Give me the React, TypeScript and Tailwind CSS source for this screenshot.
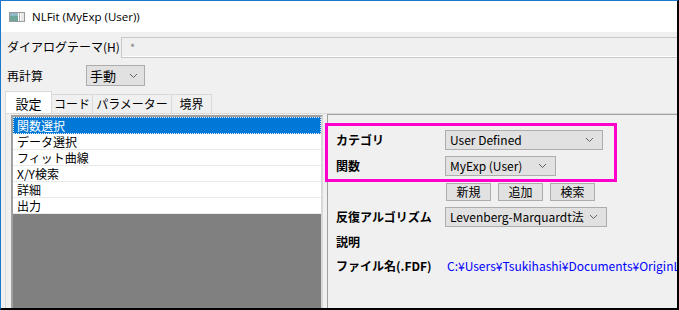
import React from "react";

const FONT = '"Noto Sans CJK JP", "Noto Sans", sans-serif';

function Chevron() {
  return (
    <svg width="9" height="6" viewBox="0 0 9 6" className="shrink-0">
      <polyline points="1,1 4.5,4.5 8,1" fill="none" stroke="#606060" strokeWidth="1" />
    </svg>
  );
}

function Select({ w, text, cls = "" }: { w: string; text: string; cls?: string }) {
  return (
    <div className={`${w} h-[20px] shrink-0 border border-[#adadad] bg-[#e1e1e1] flex items-center justify-between pl-[4px] pr-[8px] text-[12px] leading-none ${cls}`}>
      <span className="whitespace-nowrap">{text}</span>
      <Chevron />
    </div>
  );
}

function Btn({ text }: { text: string }) {
  return (
    <div className="w-[45px] h-[18px] border border-[#adadad] bg-[#e1e1e1] flex items-center justify-center text-[12px] leading-none">
      {text}
    </div>
  );
}

export default function App() {
  const items = ["関数選択", "データ選択", "フィット曲線", "X/Y検索", "詳細", "出力"];
  return (
    <div
      className="relative w-[679px] h-[310px] flex flex-col overflow-hidden bg-[#f0f0f0] border-l border-t border-[#1c78cc] border-r-2 border-b-2 border-r-black border-b-black text-black"
      style={{ fontFamily: FONT }}
    >
      {/* title bar */}
      <div className="h-[31px] bg-white flex items-center shrink-0">
        <svg width="16" height="10" viewBox="0 0 16 10" className="ml-[8px] mt-[1px]">
          <rect x="0.5" y="0.5" width="15" height="9" fill="#ffffff" stroke="#9a9a9a" />
          <rect x="1" y="1" width="8" height="8" fill="#6fa59a" />
          <rect x="1" y="1" width="8" height="3" fill="#8fb8c8" />
          <rect x="10" y="1" width="1" height="8" fill="#b0b0b0" />
          <rect x="12" y="1" width="3" height="8" fill="#e8e8e8" />
        </svg>
        <span
          className="ml-[7px] text-[11.5px] leading-none text-[#000]"
          style={{ fontFamily: '"Open Sans", "Noto Sans", sans-serif' }}
        >
          NLFit (MyExp (User))
        </span>
      </div>

      {/* row 1 */}
      <div className="mt-[5px] h-[21px] flex shrink-0">
        <div className="w-[120px] shrink-0 pl-[6px] text-[12px] leading-[20px] whitespace-nowrap">ダイアログテーマ(H)</div>
        <div className="flex-1 border-t border-l border-b border-[#c8c8c8] bg-[#f0f0f0] flex flex-col">
          <div className="flex-1 pl-[8px] text-[11px] text-[#808080] leading-[18px]">*</div>
          <div className="h-[2px] bg-white" />
        </div>
      </div>

      {/* row 2 */}
      <div className="mt-[7px] h-[21px] flex items-center shrink-0">
        <div className="w-[85px] pl-[6px] text-[12px] leading-none">再計算</div>
        <div className="w-[59px] h-[21px] border border-[#adadad] bg-[#e1e1e1] flex items-center justify-between pl-[3px] pr-[6px] text-[13px] leading-none">
          <span>手動</span>
          <Chevron />
        </div>
      </div>

      {/* tabs */}
      <div className="mt-[5px] h-[22px] flex items-end pl-[4px] shrink-0 text-[12px] leading-none">
        <div className="w-[47px] h-[22px] bg-white border border-b-0 border-[#d9d9d9] flex items-center justify-center pt-[2px] text-[13px]">
          設定
        </div>
        <div className="w-[41px] h-[19px] bg-[#f0f0f0] border-t border-r border-[#d9d9d9] flex items-center justify-center">
          コード
        </div>
        <div className="w-[79px] h-[19px] bg-[#f0f0f0] border-t border-r border-[#d9d9d9] flex items-center justify-center">
          パラメーター
        </div>
        <div className="w-[40px] h-[19px] bg-[#f0f0f0] border-t border-r border-[#d9d9d9] flex items-center justify-center">
          境界
        </div>
      </div>

      {/* tab panel */}
      <div className="flex-1 min-h-0 ml-[4px] border-t border-l border-[#d9d9d9] flex pl-[5px] pt-[1px]">
        {/* list */}
        <div className="w-[312px] shrink-0 border-l-2 border-t-2 border-r-2 border-l-[#a0a0a0] border-t-[#a0a0a0] border-r-[#d8d8d8] bg-[#808080] flex flex-col">
          <div className="bg-white">
            {items.map((t, i) => (
              <div
                key={t}
                className={
                  i === 0
                    ? "h-[17px] bg-[#0078d7] text-white border border-dotted border-[#dfe8f5] pl-[3px] text-[12px] leading-[15px]"
                    : "h-[16px] border-b border-[#e9e9e9] pl-[4px] text-[12px] leading-[15px]"
                }
              >
                {t}
              </div>
            ))}
          </div>
        </div>
        {/* splitter */}
        <div className="w-[4px] shrink-0" />
        {/* right pane */}
        <div className="flex-1 min-w-0 overflow-hidden border-l border-t border-[#a0a0a0] mt-[-1px] pl-[8px] flex flex-col text-[12px] leading-none">
          <div className="mt-[15px] h-[20px] flex items-center">
            <div className="w-[109px] shrink-0 font-bold">カテゴリ</div>
            <Select w="w-[158px]" text="User Defined" />
          </div>
          <div className="mt-[6px] h-[20px] flex items-center">
            <div className="w-[109px] shrink-0 font-bold">関数</div>
            <Select w="w-[111px]" text="MyExp (User)" />
          </div>
          <div className="mt-[7px] h-[18px] flex items-center pl-[110px] gap-[7px]">
            <Btn text="新規" />
            <Btn text="追加" />
            <Btn text="検索" />
          </div>
          <div className="mt-[6px] h-[20px] flex items-center">
            <div className="w-[109px] shrink-0 font-bold whitespace-nowrap">反復アルゴリズム</div>
            <Select w="w-[162px]" text="Levenberg-Marquardt法" />
          </div>
          <div className="mt-[6px] h-[18px] flex items-center">
            <div className="w-[109px] font-bold">説明</div>
          </div>
          <div className="mt-[6px] h-[18px] flex items-center whitespace-nowrap">
            <div className="w-[111px] font-bold shrink-0">ファイル名(.FDF)</div>
            <div className="text-[#0000ff] shrink-0">C:¥Users¥Tsukihashi¥Documents¥OriginLab¥User Files</div>
          </div>
        </div>
      </div>

      {/* annotation highlight */}
      <div className="absolute left-[324px] top-[122px] w-[292px] h-[59px] border-[3px] border-[#ff00cc] pointer-events-none" />
    </div>
  );
}
